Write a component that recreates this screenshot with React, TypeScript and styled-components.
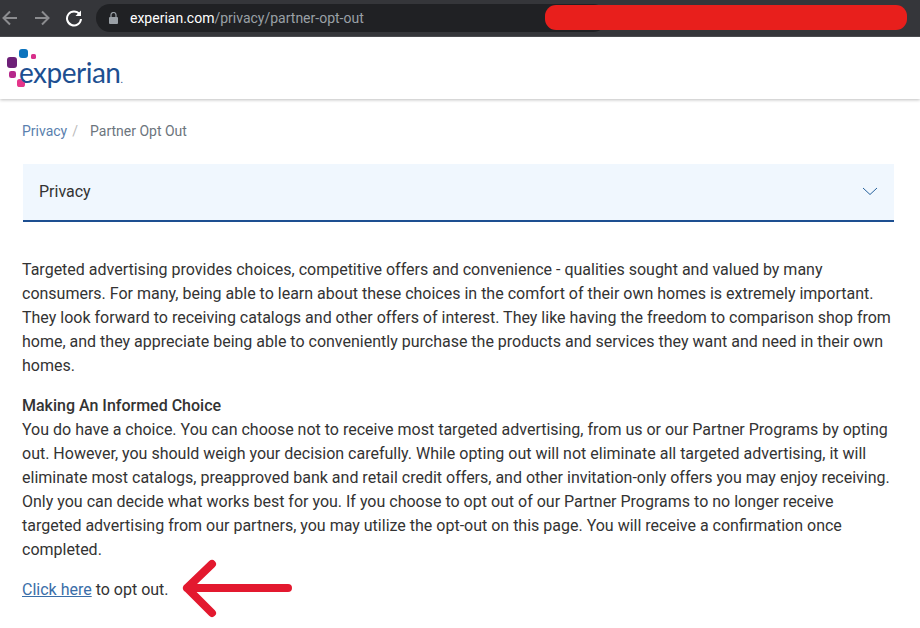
import React from "react";
import styled, { createGlobalStyle } from "styled-components";

const GlobalStyle = createGlobalStyle`
  html, body {
    margin: 0;
    padding: 0;
    background: #fff;
    font-family: Roboto, "Liberation Sans", sans-serif;
  }
`;

const Page = styled.div`
  position: relative;
  width: 920px;
  height: 628px;
  overflow: hidden;
  background: #fff;
`;

const BrowserBar = styled.div`
  position: relative;
  display: flex;
  align-items: center;
  height: 37px;
  padding-bottom: 1px;
  background: #35363a;
  border-bottom: 1px solid #4a4b4f;
  box-sizing: border-box;
`;

const NavButton = styled.div`
  display: flex;
  align-items: center;
  justify-content: center;
  width: 32px;
  height: 24px;
  &:first-child {
    margin-left: -6px;
  }
`;

const UrlPill = styled.div`
  display: flex;
  align-items: center;
  width: 511px;
  height: 28px;
  margin-left: 6px;
  padding-left: 13px;
  box-sizing: border-box;
  background: #202124;
  border-radius: 14px;
`;

const UrlHost = styled.span`
  margin-left: 12px;
  color: #fff;
  font-size: 14px;
`;

const UrlPath = styled.span`
  color: #9aa0a6;
  font-size: 14px;
`;

const Redaction = styled.div`
  position: absolute;
  left: 545px;
  top: 5px;
  width: 362px;
  height: 25px;
  background: #e81f1c;
  border-radius: 11px;
`;

const SiteHeader = styled.header`
  display: flex;
  align-items: center;
  height: 62px;
  padding-left: 7px;
  background: #fff;
  box-shadow: 0 1px 3px rgba(0, 0, 0, 0.25);
`;

const Logo = styled.div`
  position: relative;
  width: 116px;
  height: 40px;
`;

const LogoWord = styled.span`
  position: absolute;
  left: 12px;
  top: 9px;
  color: #1d4f91;
  font-family: Lato, "Open Sans", sans-serif;
  font-size: 28px;
  line-height: 30px;
  letter-spacing: -0.5px;
`;

const LogoDot = styled.span`
  color: #1d4f91;
  font-size: 10px;
`;

const Content = styled.main`
  padding: 0 26px 0 22px;
`;

const Breadcrumbs = styled.nav`
  display: flex;
  align-items: center;
  height: 20px;
  margin-top: 22px;
  font-size: 14px;
`;

const CrumbLink = styled.a`
  color: #5a7fae;
`;

const CrumbSeparator = styled.span`
  margin: 0 12px 0 5px;
  color: #bbb;
`;

const CrumbCurrent = styled.span`
  color: #6c757d;
`;

const AccordionHead = styled.div`
  display: flex;
  align-items: center;
  justify-content: space-between;
  height: 58px;
  margin: 23px 0 0 1px;
  padding: 0 16px 2px 16px;
  box-sizing: border-box;
  background: #f0f7fe;
  border-bottom: 2px solid #1d4f91;
  color: #333;
  font-size: 16px;
`;

const Article = styled.article`
  margin-top: 36px;
  color: #333;
  font-size: 16px;
  line-height: 24px;
`;

const Paragraph = styled.p`
  margin: 0 0 16px;
`;

const Lead = styled.strong`
  font-weight: 500;
`;

const Link = styled.a`
  color: #3a6ea8;
  text-decoration: underline;
`;

const ArrowMark = styled.svg`
  position: absolute;
  left: 175px;
  top: 553px;
`;

const App: React.FC = () => (
  <Page>
    <GlobalStyle />
    <BrowserBar>
      <NavButton>
        <svg width="20" height="20" viewBox="0 0 20 20" fill="none" stroke="#8b8c8f" strokeWidth="2">
          <path d="M17 10H4M10 3.5 3.5 10l6.5 6.5" />
        </svg>
      </NavButton>
      <NavButton>
        <svg width="20" height="20" viewBox="0 0 20 20" fill="none" stroke="#8b8c8f" strokeWidth="2">
          <path d="M3 10h13M10 3.5l6.5 6.5-6.5 6.5" />
        </svg>
      </NavButton>
      <NavButton>
        <svg width="18" height="18" viewBox="0 0 18 18" fill="none">
          <path d="M14.6 5.2A7 7 0 1 0 16 10" stroke="#fff" strokeWidth="2" />
          <path d="M16 1.5V7h-5.5z" fill="#fff" />
        </svg>
      </NavButton>
      <UrlPill>
        <svg width="9" height="12" viewBox="0 0 9 12" fill="#9aa0a6">
          <path d="M1 5h7a1 1 0 0 1 1 1v5a1 1 0 0 1-1 1H1a1 1 0 0 1-1-1V6a1 1 0 0 1 1-1z" />
          <path d="M2 5V3a2.5 2.5 0 0 1 5 0v2" fill="none" stroke="#9aa0a6" strokeWidth="1.2" />
        </svg>
        <UrlHost>experian.com</UrlHost>
        <UrlPath>/privacy/partner-opt-out</UrlPath>
      </UrlPill>
      <Redaction />
    </BrowserBar>

    <SiteHeader>
      <Logo>
        <svg width="30" height="40" viewBox="0 0 30 40">
          <rect x="12" y="1" width="9" height="9" rx="3" fill="#0b73bd" />
          <rect x="24" y="6" width="5" height="5" rx="1.6" fill="#d82f8a" />
          <rect x="0" y="9" width="10" height="11" rx="3" fill="#6d2077" />
          <rect x="2" y="23" width="7" height="7" rx="2.2" fill="#b5288a" />
          <rect x="10" y="31" width="8" height="8" rx="2.6" fill="#e5358a" />
        </svg>
        <LogoWord>
          experian<LogoDot>.</LogoDot>
        </LogoWord>
      </Logo>
    </SiteHeader>

    <Content>
      <Breadcrumbs>
        <CrumbLink>Privacy</CrumbLink>
        <CrumbSeparator>/</CrumbSeparator>
        <CrumbCurrent>Partner Opt Out</CrumbCurrent>
      </Breadcrumbs>

      <AccordionHead>
        Privacy
        <svg width="16" height="9" viewBox="0 0 16 9" fill="none" stroke="#26619c" strokeWidth="1">
          <path d="M1 1l7 6.5L15 1" />
        </svg>
      </AccordionHead>

      <Article>
        <Paragraph>
          Targeted advertising provides choices, competitive offers and convenience - qualities sought and valued by many
          consumers. For many, being able to learn about these choices in the comfort of their own homes is extremely
          important. They look forward to receiving catalogs and other offers of interest. They like having the freedom to
          comparison shop from home, and they appreciate being able to conveniently purchase the products and services they
          want and need in their own homes.
        </Paragraph>
        <Paragraph>
          <Lead>Making An Informed Choice</Lead>
          <br />
          You do have a choice. You can choose not to receive most targeted advertising, from us or our Partner Programs by
          opting out. However, you should weigh your decision carefully. While opting out will not eliminate all targeted
          advertising, it will eliminate most catalogs, preapproved bank and retail credit offers, and other invitation-only
          offers you may enjoy receiving. Only you can decide what works best for you. If you choose to opt out of our
          Partner Programs to no longer receive targeted advertising from our partners, you may utilize the opt-out on this
          page. You will receive a confirmation once completed.
        </Paragraph>
        <Paragraph>
          <Link>Click here</Link> to opt out.
        </Paragraph>
      </Article>
    </Content>

    <ArrowMark width="125" height="70" viewBox="0 0 125 70" fill="none" stroke="#e3192f" strokeWidth="8" strokeLinecap="round" strokeLinejoin="round">
      <path d="M113 35H12M37 11 12 35 37 60" />
    </ArrowMark>
  </Page>
);

export default App;
